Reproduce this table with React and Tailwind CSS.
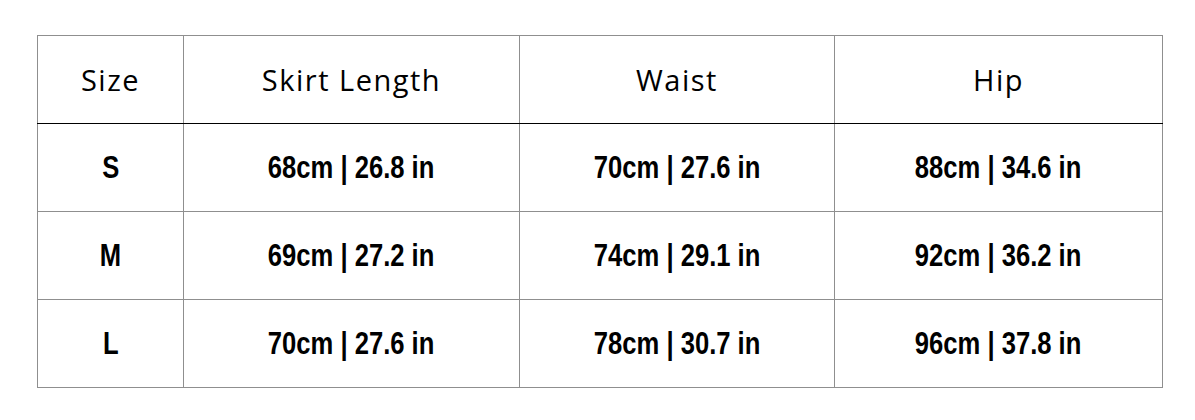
const rows = [
  ['S', '68cm | 26.8 in', '70cm | 27.6 in', '88cm | 34.6 in'],
  ['M', '69cm | 27.2 in', '74cm | 29.1 in', '92cm | 36.2 in'],
  ['L', '70cm | 27.6 in', '78cm | 30.7 in', '96cm | 37.8 in'],
];

const headers = ['Size', 'Skirt Length', 'Waist', 'Hip'];

export default function App() {
  return (
    <div className="w-[1195px] h-[420px] bg-white pl-[37px] pt-[35px]">
      <table className="border-collapse table-fixed w-[1125px]">
        <colgroup>
          <col className="w-[146px]" />
          <col className="w-[336px]" />
          <col className="w-[315px]" />
          <col className="w-[328px]" />
        </colgroup>
        <thead>
          <tr className="h-[88px] border-b border-b-black">
            {headers.map((h) => (
              <th
                key={h}
                className="border border-[#8f8f8f] border-b-black font-normal text-[29px] tracking-[1.5px] text-black font-['Open_Sans',sans-serif] text-center align-middle"
              >
                {h}
              </th>
            ))}
          </tr>
        </thead>
        <tbody>
          {rows.map((r) => (
            <tr key={r[0]} className="h-[88px]">
              {r.map((c, i) => (
                <td
                  key={i}
                  className="border border-[#8f8f8f] text-center align-middle text-black"
                >
                  <span className="inline-block scale-x-[0.8] font-bold text-[32px] leading-none whitespace-nowrap font-['Liberation_Sans',Arial,sans-serif]">
                    {c}
                  </span>
                </td>
              ))}
            </tr>
          ))}
        </tbody>
      </table>
    </div>
  );
}
